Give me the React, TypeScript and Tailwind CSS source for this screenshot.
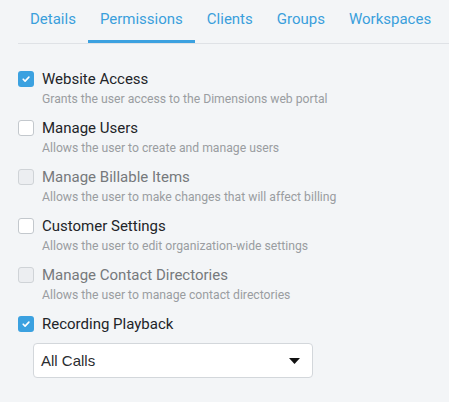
import { useState } from 'react';

type Permission = {
  label: string;
  description?: string;
  checked: boolean;
  disabled?: boolean;
};

const tabs = ['Details', 'Permissions', 'Clients', 'Groups', 'Workspaces'];

const permissions: Permission[] = [
  { label: 'Website Access', description: 'Grants the user access to the Dimensions web portal', checked: true },
  { label: 'Manage Users', description: 'Allows the user to create and manage users', checked: false },
  { label: 'Manage Billable Items', description: 'Allows the user to make changes that will affect billing', checked: false, disabled: true },
  { label: 'Customer Settings', description: 'Allows the user to edit organization-wide settings', checked: false },
  { label: 'Manage Contact Directories', description: 'Allows the user to manage contact directories', checked: false, disabled: true },
  { label: 'Recording Playback', checked: true },
];

function Checkbox({ checked, disabled }: { checked: boolean; disabled?: boolean }) {
  if (checked) {
    return (
      <span className="flex h-4 w-4 shrink-0 items-center justify-center rounded-[3px] bg-[#3ba1e0]">
        <svg width="10" height="10" viewBox="0 0 10 10" fill="none">
          <path d="M2.2 5.2l1.9 1.9 3.8-4" stroke="white" strokeWidth="1.6" strokeLinecap="round" strokeLinejoin="round" />
        </svg>
      </span>
    );
  }
  return (
    <span
      className={
        disabled
          ? 'h-4 w-4 shrink-0 rounded-[3px] border border-[#cfd3d7] bg-[#eceef1]'
          : 'h-4 w-4 shrink-0 rounded-[3px] border border-[#c3c8cd] bg-white'
      }
    />
  );
}

export default function App() {
  const [active] = useState('Permissions');

  return (
    <div className="h-[402px] w-full bg-[#f3f5f7] font-['Roboto',sans-serif]">
      <div className="ml-[18px] flex border-b border-[#dfe2e6]">
        {tabs.map((t) => (
          <div
            key={t}
            className={
              t === active
                ? 'h-[43px] border-b-[3px] border-[#3ba1e0] px-3 pt-[10px] text-[15px] leading-[18px] text-[#3a9fdc]'
                : 'h-[43px] border-b-[3px] border-transparent px-3 pt-[10px] text-[15px] leading-[18px] text-[#3a9fdc]'
            }
          >
            {t}
          </div>
        ))}
      </div>

      <div className="px-[18px] pt-[26px]">
        {permissions.map((p) => (
          <div key={p.label} className="mb-3">
            <div className="flex items-center gap-2">
              <Checkbox checked={p.checked} disabled={p.disabled} />
              <span className={p.disabled ? 'text-[15px] leading-[18px] text-[#76797c]' : 'text-[15px] leading-[18px] text-[#222428]'}>
                {p.label}
              </span>
            </div>
            {p.description && (
              <div className="mt-[3px] pl-6 text-[12.2px] leading-4 text-[#9a9da1]">{p.description}</div>
            )}
          </div>
        ))}

        {/* playback scope select */}
        <div className="-mt-[2px] ml-[15px] flex h-[35px] w-[280px] items-center justify-between rounded-[4px] border border-[#d3d7db] bg-white pl-[7px] pr-[12px]">
          <span className="pt-px font-['Liberation_Sans',sans-serif] text-[15px] text-[#2a2c30]">All Calls</span>
          <svg width="11" height="6" viewBox="0 0 11 6">
            <path d="M0 0h11L5.5 6z" fill="#111" />
          </svg>
        </div>
      </div>
    </div>
  );
}
